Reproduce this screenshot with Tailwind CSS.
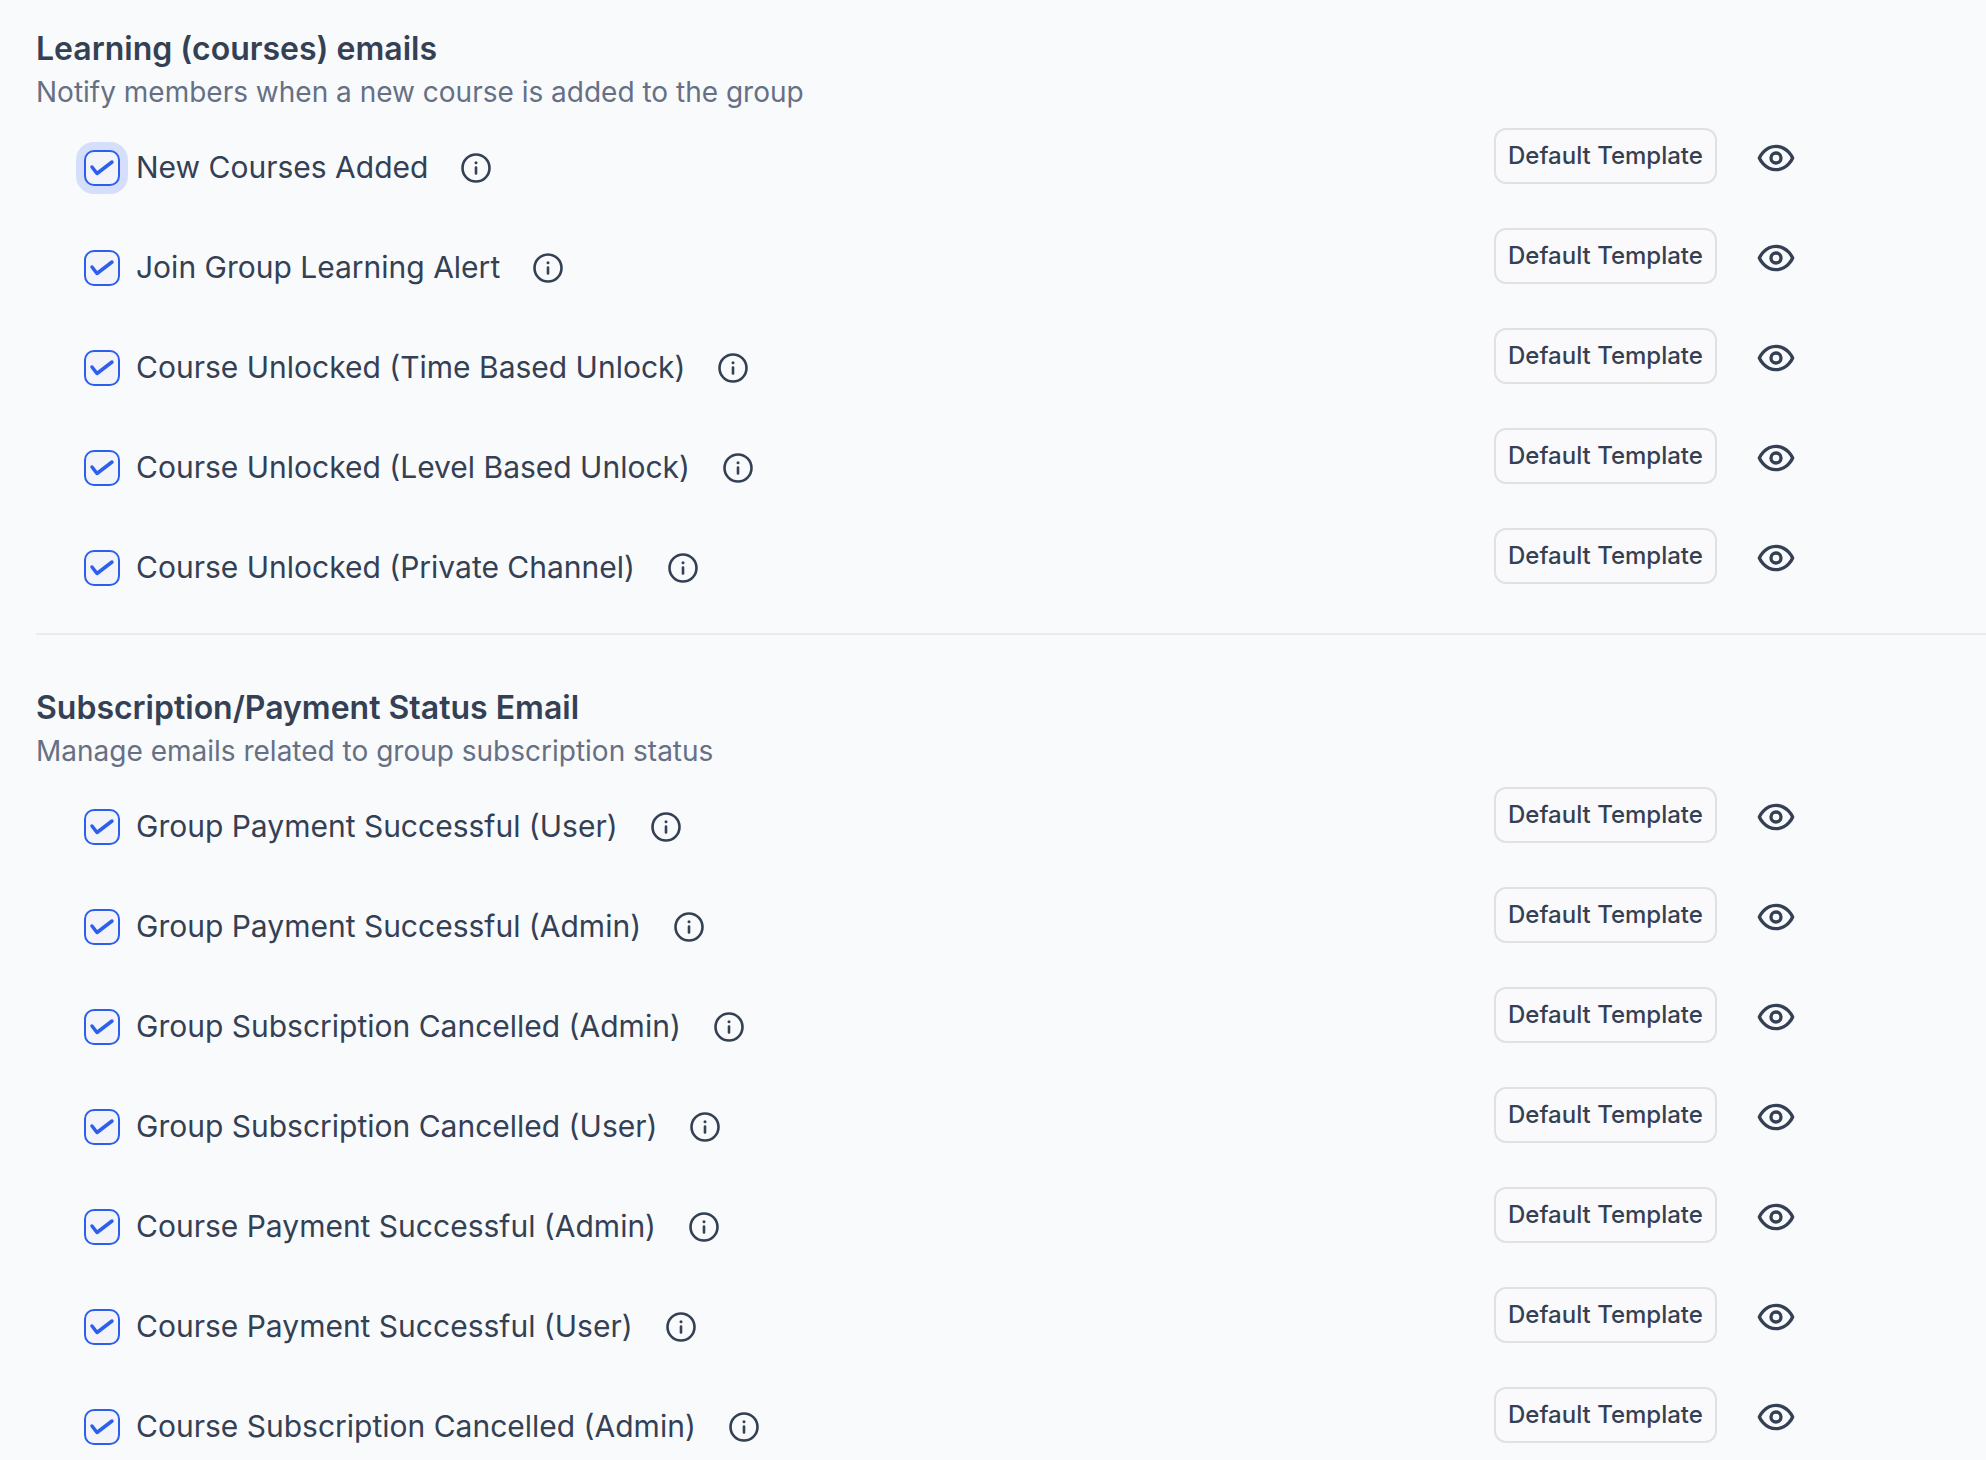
<!DOCTYPE html>
<html lang="en">
<head>
    <meta charset="UTF-8">
    <meta name="viewport" content="width=device-width, initial-scale=1.0">
    <title>Group Email Settings</title>
    <script src="https://cdn.jsdelivr.net/npm/@tailwindcss/browser@4"></script>
    <style>
        body {
            font-family: 'Inter', 'Liberation Sans', sans-serif;
        }
    </style>
</head>
<body class="bg-[#f9fafc] text-[#344054]">
    <main class="pl-9 pt-7 overflow-hidden">
        <section>
            <h2 class="text-[32px] leading-[42px] font-semibold">Learning (courses) emails</h2>
            <p class="text-[28px] leading-11 text-[#667085]">Notify members when a new course is added to the group</p>
            <ul id="learning-list" class="pt-[14px] pb-[5px] border-b-2 border-[#eaecf0]"></ul>
        </section>
        <section class="pt-[52px]">
            <h2 class="text-[32px] leading-[42px] font-semibold">Subscription/Payment Status Email</h2>
            <p class="text-[28px] leading-11 text-[#667085]">Manage emails related to group subscription status</p>
            <ul id="payment-list" class="pt-[14px]"></ul>
        </section>
    </main>

    <template id="row-template">
        <li class="flex items-start h-25">
            <div class="flex-1 flex items-center pl-12 pt-[19px]">
                <span class="grid shrink-0">
                    <input type="checkbox" checked class="col-start-1 row-start-1 appearance-none size-9 rounded-[10px] border-2 border-[#2b5fec] bg-[#f3f4f9]">
                    <svg class="col-start-1 row-start-1 size-9 pointer-events-none" viewBox="0 0 36 36" fill="none" stroke="#2b5fec" stroke-width="3.5" stroke-linecap="round" stroke-linejoin="round">
                        <path d="M8 17l5 6.5L28 12"/>
                    </svg>
                </span>
                <label class="pl-4 pb-0.5 text-[30px] leading-10"></label>
                <button type="button" aria-label="More info" class="ml-[30px] shrink-0">
                    <svg class="size-9" viewBox="0 0 36 36" fill="none" stroke="currentColor" stroke-width="2.6" stroke-linecap="round">
                        <circle cx="18" cy="18" r="13.5"/>
                        <path d="M18 17.6v5.8"/>
                        <circle cx="18" cy="12.8" r="1.5" fill="currentColor" stroke="none"/>
                    </svg>
                </button>
            </div>
            <div class="w-[492px] shrink-0 flex items-center gap-[39px]">
                <button type="button" class="h-14 px-3 rounded-xl border-2 border-[#e1e1e4] bg-[#fafafc] text-2xl leading-8 font-medium whitespace-nowrap">Default Template</button>
                <button type="button" aria-label="Preview" class="pt-1">
                    <svg class="size-10" viewBox="0 0 24 24" fill="none" stroke="currentColor" stroke-width="2" stroke-linecap="round" stroke-linejoin="round">
                        <path d="M2 12s3-7 10-7 10 7 10 7-3 7-10 7-10-7-10-7Z"/>
                        <circle cx="12" cy="12" r="3"/>
                    </svg>
                </button>
            </div>
        </li>
    </template>

    <script>
        const learningEmails = [
            'New Courses Added',
            'Join Group Learning Alert',
            'Course Unlocked (Time Based Unlock)',
            'Course Unlocked (Level Based Unlock)',
            'Course Unlocked (Private Channel)',
        ];
        const paymentEmails = [
            'Group Payment Successful (User)',
            'Group Payment Successful (Admin)',
            'Group Subscription Cancelled (Admin)',
            'Group Subscription Cancelled (User)',
            'Course Payment Successful (Admin)',
            'Course Payment Successful (User)',
            'Course Subscription Cancelled (Admin)',
        ];
        const rowTemplate = document.getElementById('row-template');

        function renderRows(listId, emails) {
            const list = document.getElementById(listId);
            emails.forEach((email, index) => {
                const row = rowTemplate.content.cloneNode(true);
                const checkbox = row.querySelector('input');
                const label = row.querySelector('label');
                checkbox.id = listId + '-' + index;
                label.htmlFor = checkbox.id;
                label.textContent = email;
                list.appendChild(row);
            });
        }

        renderRows('learning-list', learningEmails);
        renderRows('payment-list', paymentEmails);

        // first option has the focus ring
        document.getElementById('learning-list-0').classList.add('ring-8', 'ring-[#d5dffb]');
    </script>
</body>
</html>
